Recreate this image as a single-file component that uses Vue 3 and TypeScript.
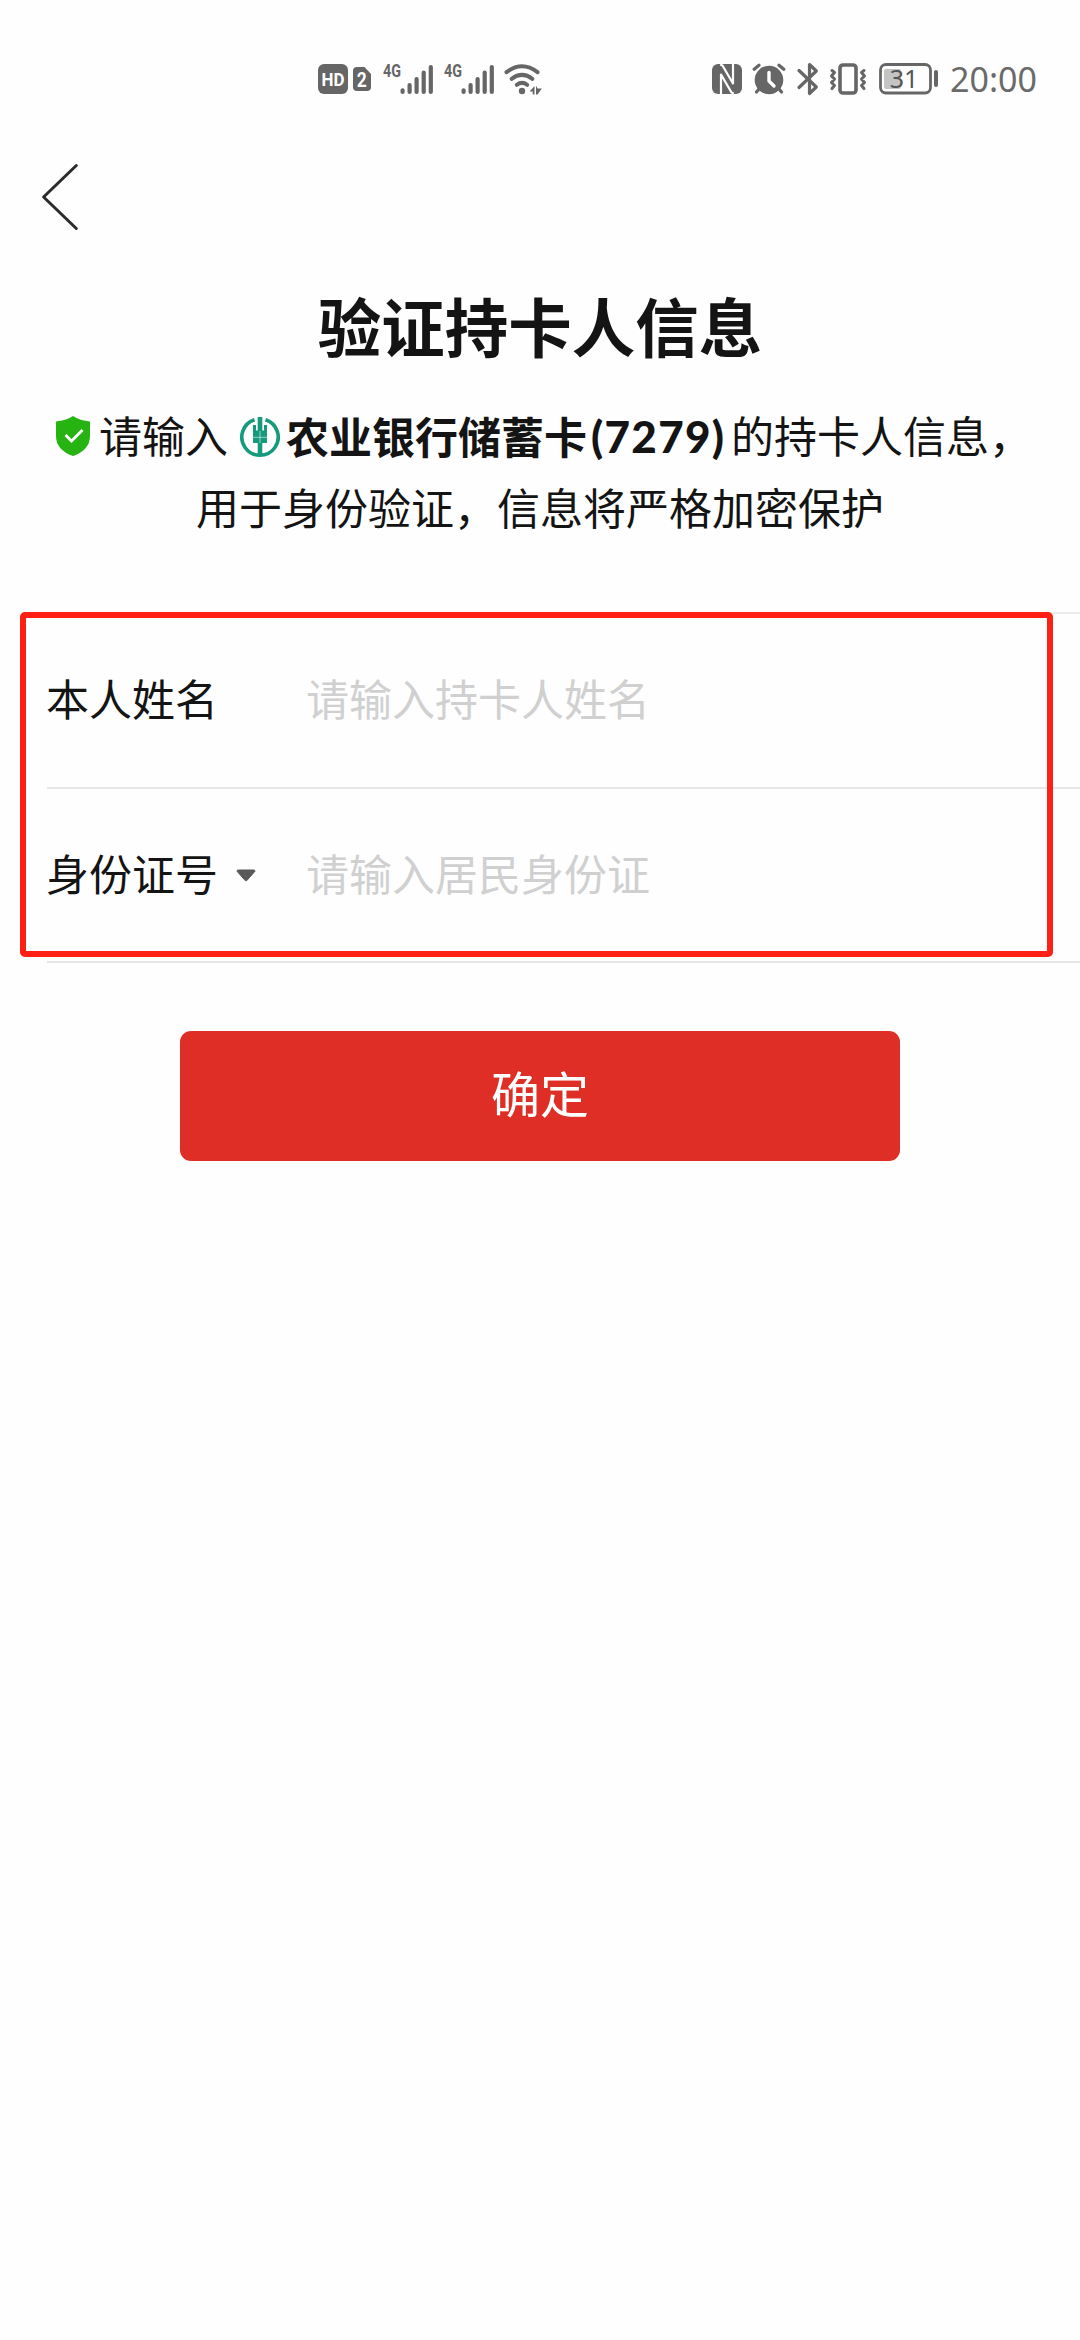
<script setup lang="ts">
import { ref } from 'vue'

interface Field {
  key: string
  label: string
  placeholder: string
  selectable: boolean
}

const fields: Field[] = [
  { key: 'name', label: '本人姓名', placeholder: '请输入持卡人姓名', selectable: false },
  { key: 'id', label: '身份证号', placeholder: '请输入居民身份证', selectable: true },
]
const values = ref<Record<string, string>>({ name: '', id: '' })
const sims: number[] = [1, 2]
</script>

<template>
  <div class="screen">
    <header class="status">
      <svg class="hd" width="30" height="30" viewBox="0 0 30 30">
        <rect width="30" height="30" rx="6" fill="#666" />
        <text x="3.5" y="21.7" textLength="23" lengthAdjust="spacingAndGlyphs" class="hd-text">HD</text>
      </svg>
      <svg class="sim" width="18" height="24" viewBox="0 0 18 24">
        <path d="M4 0H11.5L18 7V20a4 4 0 0 1-4 4H4a4 4 0 0 1-4-4V4a4 4 0 0 1 4-4Z" fill="#666" />
        <text x="3.8" y="19.6" textLength="10" lengthAdjust="spacingAndGlyphs" class="sim-text">2</text>
      </svg>
      <svg v-for="s in sims" :key="s" class="signal" width="51" height="40" viewBox="0 -4 51 40">
        <text x="0" y="14" textLength="18" lengthAdjust="spacingAndGlyphs" class="net-text">4G</text>
        <g stroke="#666" stroke-width="4.2" stroke-linecap="round">
          <path d="M19.6 27.3V29M26.6 22V29M33.6 16V29M40.7 9.5V29M47.8 4V29" />
        </g>
      </svg>
      <svg class="wifi" width="38" height="32" viewBox="0 0 38 32">
        <g fill="none" stroke="#666" stroke-width="4" stroke-linecap="round">
          <path d="M2.5 9.2Q18 -2.6 33.5 9.2" />
          <path d="M7.6 15.8Q18 8 28.4 15.8" />
          <path d="M12.8 21.8Q18 18 23.2 21.8" />
        </g>
        <circle cx="18" cy="28" r="3.2" fill="#666" />
        <path d="M30.5 23V31.5H28.7V28.6H25.6ZM32 22.8V31.5H33.6L37.8 25.5H33.6Z" fill="#666" />
      </svg>

      <svg class="nfc" width="30" height="30" viewBox="0 0 30 30">
        <rect width="30" height="30" rx="6" fill="#666" />
        <path d="M9 30V10.5L19.5 28.5L21.8 29.5M21 0V19.5L10.5 1.5L8.2 0.5" fill="none" stroke="#fff" stroke-width="2.2" stroke-linejoin="round" />
      </svg>
      <svg class="alarm" width="34" height="32" viewBox="0 0 34 32">
        <g stroke="#666" stroke-width="3.2" stroke-linecap="round">
          <path d="M2.2 6.2L7 2.2M31.8 6.2L27 2.2M7 26L4.5 29M27 26L29.5 29" />
        </g>
        <circle cx="17" cy="17" r="14.3" fill="#666" />
        <path d="M17 9.5V18L22 23" fill="none" stroke="#fff" stroke-width="3.4" stroke-linecap="round" stroke-linejoin="round" />
      </svg>
      <svg class="bt" width="22" height="34" viewBox="0 0 22 34">
        <path d="M2 8.5L19.3 25L12.5 31.5V2.5L19.3 9L2 25.5" fill="none" stroke="#666" stroke-width="3.2" stroke-linecap="round" stroke-linejoin="round" />
      </svg>
      <svg class="vibrate" width="38" height="32" viewBox="0 0 38 32">
        <g fill="none" stroke="#666" stroke-width="3" stroke-linecap="round" stroke-linejoin="round">
          <rect x="11" y="2" width="16" height="28" rx="3" stroke-width="3.6" />
          <path d="M3 7.5L5.5 9.5L2.5 13L5.5 16L2.5 19.5L5.5 22.5L3 25.5M35 7.5L32.5 9.5L35.5 13L32.5 16L35.5 19.5L32.5 22.5L35 25.5" />
        </g>
      </svg>
      <svg class="battery" width="60" height="40" viewBox="0 -4 60 40">
        <rect x="5" y="6" width="17" height="20" rx="2" fill="#c4c4c4" />
        <rect x="1.5" y="1.5" width="50" height="28.5" rx="5.5" fill="none" stroke="#666" stroke-width="2.8" />
        <rect x="55" y="7" width="4" height="17" rx="2" fill="#666" />
        <text x="25" y="24.8" text-anchor="middle" class="battery-text">31</text>
      </svg>
      <span class="clock">20:00</span>
    </header>

    <nav class="nav">
      <svg width="40" height="72" viewBox="0 0 40 72">
        <path d="M36.3 4.5L3.6 36L36.3 67.5" fill="none" stroke="#2b2b2b" stroke-width="3" stroke-linecap="round" stroke-linejoin="round" />
      </svg>
    </nav>

    <h1 class="title">验证持卡人信息</h1>

    <div class="desc">
      <div class="line first">
        <svg class="shield" width="34" height="40" viewBox="0 0 34 40">
          <path d="M17 0Q24 4.8 34 5.4V20Q34 34 17 40Q0 34 0 20V5.4Q10 4.8 17 0Z" fill="#27b413" />
          <path d="M9.5 19L15.5 25L26.5 14" fill="none" stroke="#fff" stroke-width="2.8" />
        </svg>
        <span>请输入</span>
        <svg class="bank" width="40" height="40" viewBox="0 0 40 40">
          <path d="M14.5 2.7A18.2 18.2 0 1 0 25.5 2.7" fill="none" stroke="#159a7d" stroke-width="3.6" />
          <path d="M17.7 0H22.3V13.5H24V8H27V26H22.3V38H17.7V26H13V8H16V13.5H17.7Z" fill="#159a7d" />
          <path d="M13 20.3H27M20 14V26" stroke="#b9e2d9" stroke-width="0.8" />
        </svg>
        <strong class="card">农业银行储蓄卡<span class="digits">(7279)</span></strong>
        <span>的持卡人信息，</span>
      </div>
      <div class="line">用于身份验证，信息将严格加密保护</div>
    </div>

    <main class="form">
      <div v-for="f in fields" :key="f.key" class="row">
        <label class="label" :for="f.key">{{ f.label }}</label>
        <span class="caret">
          <svg v-if="f.selectable" width="20" height="13" viewBox="0 0 20 13">
            <path d="M1.6 1H18.4L19 2.2L10.8 11.6H9.2L1 2.2Z" fill="#595959" stroke="#595959" stroke-width="1" stroke-linejoin="round" />
          </svg>
        </span>
        <input :id="f.key" v-model="values[f.key]" class="input" :placeholder="f.placeholder" />
      </div>
      <div class="highlight"></div>
    </main>

    <button class="submit" type="button">确定</button>
  </div>
</template>

<style>
body {
  margin: 0;
  background: #fefefe;
}
</style>

<style scoped>
.screen {
  box-sizing: border-box;
  width: 1080px;
  height: 2340px;
  overflow: hidden;
  display: flex;
  flex-direction: column;
  background: #fefefe;
  color: #141414;
  font-family: "Noto Sans CJK SC", sans-serif;
  font-size: 43px;
}
svg {
  display: block;
  flex: none;
  overflow: visible;
}
.status {
  display: flex;
  align-items: center;
  height: 157px;
  box-sizing: border-box;
  padding-left: 318px;
  color: #6a6a6a;
}
.hd-text {
  font: 700 18.5px Roboto, sans-serif;
  fill: #fff;
}
.sim-text {
  font: 700 20px Roboto, sans-serif;
  fill: #fff;
}
.net-text {
  font: 700 18.5px Roboto, sans-serif;
  fill: #666;
}
.sim { margin-left: 5px; }
.signal { margin-left: 12px; }
.signal + .signal { margin-left: 10px; }
.wifi { margin-left: 9px; }
.nfc { margin-left: 170px; }
.alarm { margin-left: 10px; }
.bt { margin-left: 11px; }
.vibrate { margin-left: 10px; }
.battery { margin-left: 12px; }
.battery-text {
  font: 400 25px "Noto Sans", sans-serif;
  fill: #555;
}
.clock {
  margin-left: 11px;
  font-family: "Noto Sans", sans-serif;
  font-weight: 400;
  font-size: 34px;
  line-height: 50px;
  white-space: nowrap;
}
.nav {
  height: 80px;
  padding: 4px 0 0 40px;
  box-sizing: border-box;
}
.title {
  margin: 39px 0 0;
  height: 96px;
  line-height: 96px;
  font-size: 63.5px;
  font-weight: 700;
  text-align: center;
}
.desc {
  margin-top: 26px;
  height: 144px;
}
.line {
  height: 72px;
  line-height: 72px;
  text-align: center;
  white-space: nowrap;
}
.first {
  display: flex;
  align-items: center;
  padding-left: 56px;
}
.shield { margin: 4px 9px 0 0; }
.bank { margin: 6px 6px 0 12px; }
.card {
  display: flex;
  padding-top: 3px;
  width: 445px;
  font-weight: 700;
}
.digits {
  margin-left: 4px;
  padding-top: 1px;
  font-family: Lato, sans-serif;
  font-weight: 900;
  font-size: 44px;
  letter-spacing: 1.3px;
}
.form {
  position: relative;
  margin: 70px 0 0 47px;
  border-top: 2px solid #ececec;
}
.row {
  display: flex;
  align-items: center;
  box-sizing: border-box;
  height: 175px;
  border-bottom: 2px solid #e6e6e6;
}
.row + .row {
  height: 174px;
}
.label {
  width: 172px;
  margin-left: -1px;
  padding-bottom: 7px;
  white-space: nowrap;
}
.caret {
  width: 70px;
  margin-left: 18px;
}
.input {
  flex: 1;
  min-width: 0;
  padding: 0 0 7px;
  border: 0;
  outline: 0;
  background: transparent;
  font: inherit;
  color: inherit;
}
.input::placeholder {
  color: #d0d0d0;
  opacity: 1;
}
/* Red frame laid over the form rows */
.highlight {
  position: absolute;
  left: -27px;
  top: -2px;
  width: 1033px;
  height: 345px;
  box-sizing: border-box;
  border: 6px solid #ff1f14;
  border-radius: 5px;
  pointer-events: none;
}
.submit {
  width: 720px;
  height: 130px;
  margin: 68px auto 0;
  padding: 0 0 9px;
  border: 0;
  border-radius: 11px;
  background: #df2e25;
  color: #fff;
  font-family: inherit;
  font-size: 49px;
}
</style>
